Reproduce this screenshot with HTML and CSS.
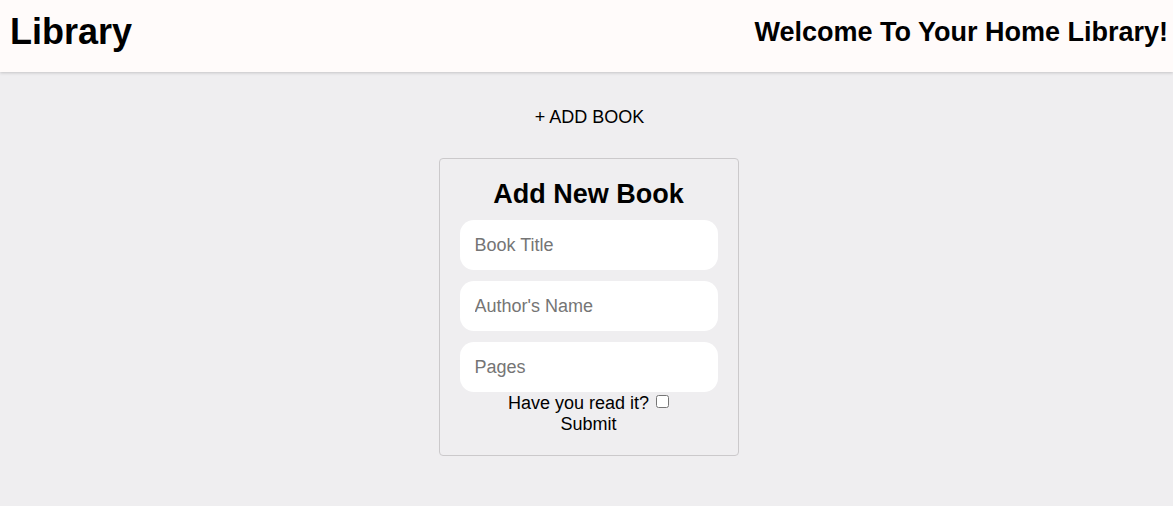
FILE: index.html
```html
<!DOCTYPE html>
<html>
<head>
<meta charset="utf-8">
<link rel="stylesheet" href="styles.css">
</head>
<body>
<header class="header">
  <h1 class="logo">Library</h1>
  <h2 class="welcome">Welcome To Your Home Library!</h2>
</header>
<main class="main">
  <button class="add-btn">+ ADD BOOK</button>
  <form class="card">
    <h2 class="card-title">Add New Book</h2>
    <input class="field" type="text" placeholder="Book Title">
    <input class="field" type="text" placeholder="Author's Name">
    <input class="field" type="text" placeholder="Pages">
    <label class="read">Have you read it? <input class="check" type="checkbox"></label>
    <button class="submit" type="button">Submit</button>
  </form>
</main>
</body>
</html>
```
FILE: styles.css
```css
* { box-sizing: border-box; }
html, body { margin: 0; padding: 0; }
body {
  background: #efeef0;
  font-family: "Liberation Sans", Arial, sans-serif;
  color: #000;
  height: 506px;
}
.header {
  height: 72px;
  background: #fffbfa;
  box-shadow: 0 1px 3px rgba(0,0,0,0.18);
  display: flex;
  align-items: center;
  justify-content: space-between;
  padding: 0 5px 8px 10px;
}
.logo {
  margin: 0;
  font-size: 36px;
  font-weight: bold;
}
.welcome {
  margin: 0;
  font-size: 27px;
  font-weight: bold;
}
.main {
  display: flex;
  flex-direction: column;
  align-items: center;
  padding-top: 26px;
  padding-left: 4px;
}
.add-btn {
  font-family: inherit;
  font-size: 18px;
  background: #efeef0;
  border: none;
  padding: 9px 10px;
  color: #000;
  margin-bottom: 21px;
  margin-left: 2px;
}
.card {
  width: 300px;
  border: 1px solid #cbc9cb;
  border-radius: 4px;
  padding: 18px 20px 20px;
  display: flex;
  flex-direction: column;
  align-items: stretch;
}
.card-title {
  margin: 0 0 9px;
  text-align: center;
  font-size: 27px;
  font-weight: bold;
  line-height: 34px;
}
.field {
  height: 50px;
  border: none;
  border-radius: 14px;
  background: #fff;
  font-family: inherit;
  font-size: 18px;
  padding: 0 15px;
  margin-bottom: 11px;
  outline: none;
}
.field:last-of-type { margin-bottom: 0; }
.field::placeholder { color: #757575; }
.read {
  text-align: center;
  font-size: 18px;
  line-height: 21px;
  margin-top: 1px;
}
.check {
  width: 13px;
  height: 13px;
  margin: 0 0 0 2px;
  vertical-align: 1px;
}
.submit {
  font-family: inherit;
  font-size: 18px;
  background: #efeef0;
  border: none;
  padding: 0;
  height: 21px;
  line-height: 21px;
  color: #000;
}
```
